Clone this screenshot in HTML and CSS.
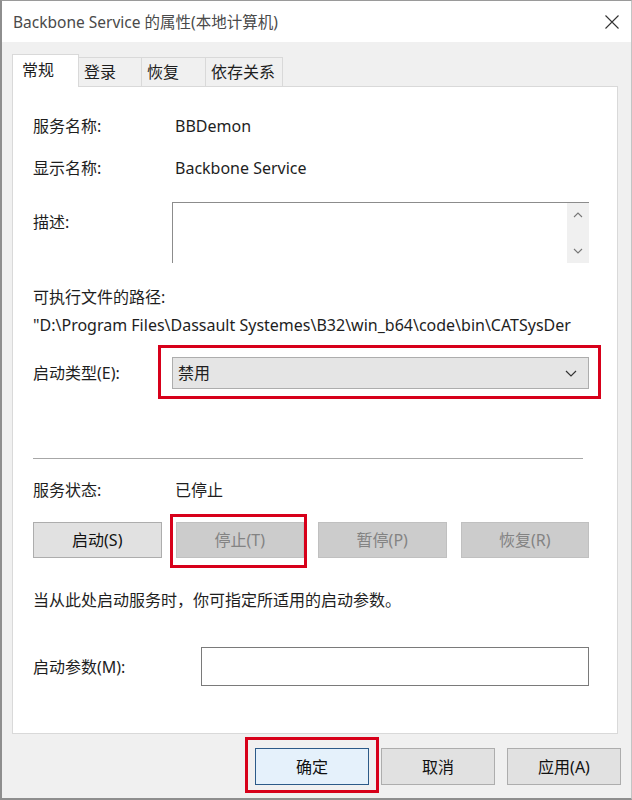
FILE: index.html
```html
<!DOCTYPE html>
<html lang="zh-CN">
<head>
<meta charset="utf-8">
<title>Backbone Service 的属性(本地计算机)</title>
<link rel="stylesheet" href="styles.css">
</head>
<body>
<div class="window">
  <div class="titlebar">
    <span class="title">Backbone Service 的属性(本地计算机)</span>
    <svg class="close" width="14" height="14" viewBox="0 0 14 14"><path d="M0.5 0.5 L13.5 13.5 M13.5 0.5 L0.5 13.5" stroke="#333" stroke-width="1.1" fill="none"/></svg>
  </div>
  <div class="body">
    <div class="tabs">
      <div class="tab active">常规</div>
      <div class="tab t2">登录</div>
      <div class="tab t3">恢复</div>
      <div class="tab t4">依存关系</div>
    </div>
    <div class="panel">
      <div class="row r1"><span class="label">服务名称:</span><span class="value">BBDemon</span></div>
      <div class="row r2"><span class="label">显示名称:</span><span class="value">Backbone Service</span></div>
      <div class="row desc">
        <span class="label desc-label">描述:</span>
        <div class="textarea">
          <div class="scroll">
            <svg width="10" height="6" viewBox="0 0 10 6"><path d="M1 5 L5 1 L9 5" stroke="#777" stroke-width="1.1" fill="none"/></svg>
            <svg width="10" height="6" viewBox="0 0 10 6"><path d="M1 1 L5 5 L9 1" stroke="#777" stroke-width="1.1" fill="none"/></svg>
          </div>
        </div>
      </div>
      <div class="plain path-label">可执行文件的路径:</div>
      <div class="plain path">"D:\Program Files\Dassault Systemes\B32\win_b64\code\bin\CATSysDer</div>
      <div class="row startup">
        <span class="label">启动类型(E):</span>
        <div class="select annot annot-select">
          <span>禁用</span>
          <svg width="12" height="7" viewBox="0 0 12 7"><path d="M1 1 L6 6 L11 1" stroke="#333" stroke-width="1.2" fill="none"/></svg>
        </div>
      </div>
      <div class="sep"></div>
      <div class="row status"><span class="label">服务状态:</span><span class="value">已停止</span></div>
      <div class="btns">
        <div class="btn">启动(S)</div>
        <div class="btn disabled annot annot-stop">停止(T)</div>
        <div class="btn disabled">暂停(P)</div>
        <div class="btn disabled">恢复(R)</div>
      </div>
      <div class="plain hint">当从此处启动服务时，你可指定所适用的启动参数。</div>
      <div class="row params">
        <span class="label params-label">启动参数(M):</span>
        <div class="input"></div>
      </div>
    </div>
    <div class="footer">
      <div class="btn fbtn default annot annot-ok">确定</div>
      <div class="btn fbtn">取消</div>
      <div class="btn fbtn">应用(A)</div>
    </div>
  </div>
</div>
</body>
</html>
```
FILE: styles.css
```css
* { box-sizing: border-box; }
html, body { margin: 0; padding: 0; }
body {
  width: 632px;
  height: 800px;
  background: #f0f0f0;
  font-family: "Noto Sans", "Noto Sans CJK SC", sans-serif;
  font-size: 16px;
  color: #1e1e1e;
}
.window {
  width: 632px;
  height: 800px;
  border-left: 2px solid #8e8e8e;
  border-top: 1px solid #9a9a9a;
  border-bottom: 2px solid #8e8e8e;
  border-right: 1px solid #c4c4c4;
  display: flex;
  flex-direction: column;
  background: #f0f0f0;
}
.titlebar {
  height: 41px;
  background: #fff;
  display: flex;
  align-items: center;
  justify-content: space-between;
  padding: 0 12px 0 11px;
}
.title {
  font-size: 15.5px;
  color: #4a4a4a;
  line-height: 22px;
}
.close { display: block; }
.body {
  flex: 1;
  display: flex;
  flex-direction: column;
  padding-top: 12px;
}
.tabs {
  display: flex;
  align-items: flex-end;
  height: 32px;
  margin-left: 10px;
}
.tab {
  height: 29px;
  border: 1px solid #d9d9d9;
  border-bottom: none;
  background: #f0f0f0;
  line-height: 22px;
  padding: 3px 0 0 5px;
  white-space: nowrap;
  margin-left: -1px;
}
.tab.active {
  margin-left: 0;
  width: 67px;
  height: 33px;
  margin-bottom: -1px;
  background: #fff;
  padding: 4px 0 0 9px;
  position: relative;
  z-index: 1;
}
.t2 { width: 64px; }
.t3 { width: 65px; }
.t4 { width: 78px; }
.panel {
  margin-left: 10px;
  width: 606px;
  height: 648px;
  border: 1px solid #d9d9d9;
  background: #fff;
  padding: 28px 28px 0 20px;
}
.row {
  display: flex;
  align-items: flex-start;
  line-height: 22px;
}
.label {
  width: 139px;
  flex: none;
}
.value { padding-left: 3px; }
.plain { line-height: 22px; white-space: nowrap; }
.r2 { margin-top: 20px; }
.desc { margin-top: 23px; height: 61px; }
.desc-label { padding-top: 9px; }
.textarea {
  flex: 1;
  height: 61px;
  border-top: 1px solid #8c8c8c;
  border-left: 1px solid #8c8c8c;
  display: flex;
  justify-content: flex-end;
}
.scroll {
  width: 22px;
  height: 60px;
  background: #f0f0f0;
  display: flex;
  flex-direction: column;
  align-items: center;
  justify-content: space-between;
  padding: 9px 0 9px;
}
.scroll svg { display: block; }
.path-label { margin-top: 23px; }
.path { margin-top: 6px; }
.startup { margin-top: 21px; align-items: center; }
.select {
  flex: 1;
  height: 32px;
  background: #e5e5e5;
  border: 1px solid #adadad;
  display: flex;
  align-items: center;
  justify-content: space-between;
  padding: 0 11px 0 5px;
}
.select svg { display: block; }
.annot { position: relative; }
.annot::after {
  content: "";
  position: absolute;
  border: 3px solid #d7001a;
  pointer-events: none;
}
.annot-select::after { top: -13px; right: -13px; bottom: -11px; left: -15px; }
.sep {
  margin-top: 69px;
  margin-right: 6px;
  border-top: 1px solid #a7a7a7;
}
.status { margin-top: 20px; }
.btns {
  margin-top: 21px;
  display: grid;
  grid-template-columns: repeat(4, 1fr);
  column-gap: 14px;
}
.btn {
  height: 36px;
  background: #e1e1e1;
  border: 1px solid #adadad;
  display: flex;
  align-items: center;
  justify-content: center;
  color: #111;
  line-height: 22px;
}
.btn.disabled {
  background: #cccccc;
  border-color: #c0c0c0;
  color: #838383;
}
.annot-stop::after { top: -9px; right: -4px; bottom: -11px; left: -7px; }
.hint { margin-top: 31px; }
.params { margin-top: 36px; align-items: center; }
.params-label { width: 168px; }
.input {
  flex: 1;
  height: 39px;
  border: 1px solid #7a7a7a;
  background: #fff;
}
.footer {
  display: flex;
  justify-content: flex-end;
  gap: 12px;
  padding: 14px 10px 0 0;
}
.fbtn { width: 114px; height: 37px; }
.fbtn.default {
  background: #e5f1fb;
  border-color: #2c5a88;
}
.annot-ok::after { top: -12px; right: -11px; bottom: -9px; left: -11px; }
```
